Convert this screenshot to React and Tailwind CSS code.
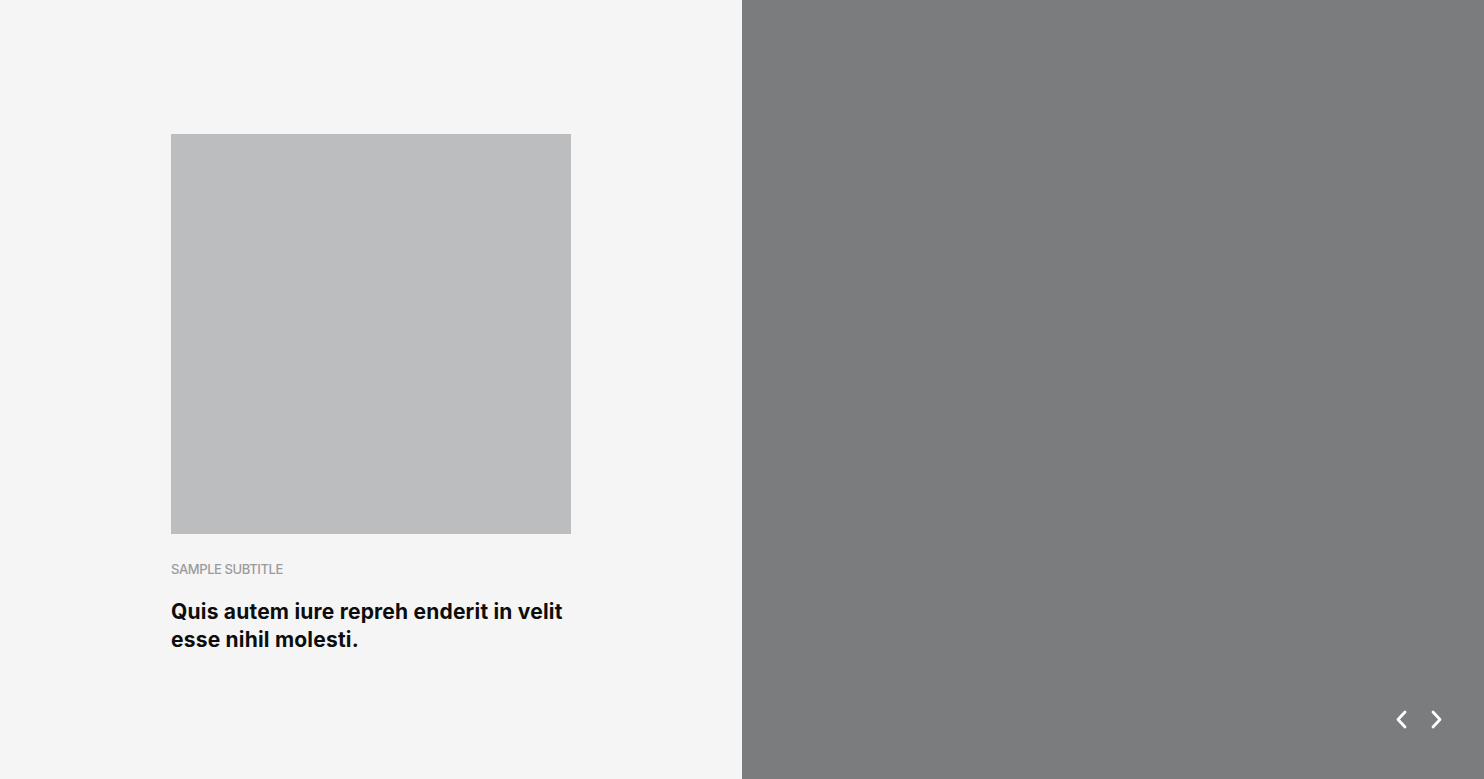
export default function App() {
  return (
    <div
      className="flex h-[779px] w-full overflow-hidden"
      style={{ fontFamily: '"Inter", "Noto Sans", sans-serif' }}
    >
      <section className="flex w-1/2 justify-center bg-[#f5f5f5] pt-[134px]">
        <div className="w-[400px]">
          <div className="h-[400px] w-[400px] bg-[#bcbdbf]" />
          <p className="mt-[25px] text-[13px] leading-5 font-medium tracking-[-0.4px] uppercase text-[#9b9b9b]">
            Sample subtitle
          </p>
          <h2 className="mt-[19px] text-[21px] leading-7 font-bold tracking-[0.2px] text-[#0d0d0d]">
            Quis autem iure repreh enderit in velit esse nihil molesti.
          </h2>
        </div>
      </section>

      <section className="relative w-1/2 bg-[#7b7c7e]">
        <div className="absolute right-[38px] bottom-[50px] flex items-center gap-[16px]">
          <button aria-label="Previous" className="flex h-[19px] w-[19px] items-center justify-center text-white">
            <svg width="13" height="19" viewBox="0 0 13 19" fill="none">
              <polyline
                points="10,2 3,9.5 10,17"
                stroke="currentColor"
                strokeWidth="2.8"
                strokeLinecap="round"
                strokeLinejoin="round"
              />
            </svg>
          </button>
          <button aria-label="Next" className="flex h-[19px] w-[19px] items-center justify-center text-white">
            <svg width="13" height="19" viewBox="0 0 13 19" fill="none">
              <polyline
                points="3,2 10,9.5 3,17"
                stroke="currentColor"
                strokeWidth="2.8"
                strokeLinecap="round"
                strokeLinejoin="round"
              />
            </svg>
          </button>
        </div>
      </section>
    </div>
  );
}
